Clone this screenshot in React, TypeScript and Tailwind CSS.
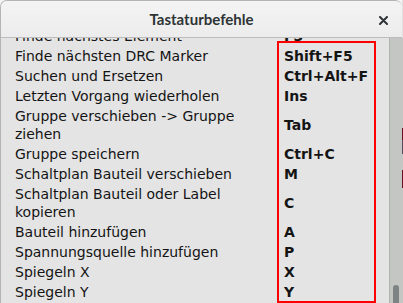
export default function App() {
  const rows: { label: string; keys: string }[] = [
    { label: "Finde nächstes Element", keys: "F3" },
    { label: "Finde nächsten DRC Marker", keys: "Shift+F5" },
    { label: "Suchen und Ersetzen", keys: "Ctrl+Alt+F" },
    { label: "Letzten Vorgang wiederholen", keys: "Ins" },
    { label: "Gruppe verschieben -> Gruppe ziehen", keys: "Tab" },
    { label: "Gruppe speichern", keys: "Ctrl+C" },
    { label: "Schaltplan Bauteil verschieben", keys: "M" },
    { label: "Schaltplan Bauteil oder Label kopieren", keys: "C" },
    { label: "Bauteil hinzufügen", keys: "A" },
    { label: "Spannungsquelle hinzufügen", keys: "P" },
    { label: "Spiegeln X", keys: "X" },
    { label: "Spiegeln Y", keys: "Y" },
  ];

  return (
    <div className="w-[403px] h-[303px] bg-[#f4f4f4] flex overflow-hidden">
      {/* window */}
      <div className="relative w-[402px] h-[303px] flex flex-col rounded-t-[7px] border-l border-t border-[#b4b4b4] overflow-hidden bg-[#e4e4e4]">
        {/* title bar */}
        <div className="h-[37px] shrink-0 flex items-center justify-center relative bg-gradient-to-b from-[#f4f4f4] to-[#ececec] border-b border-[#bcbcbc]">
          <span className="font-['Lato','DejaVu_Sans',sans-serif] font-bold text-[15px] text-[#2e3436]">
            Tastaturbefehle
          </span>
          <svg
            className="absolute right-[14px] top-[15px]"
            width="9"
            height="9"
            viewBox="0 0 9 9"
          >
            <path d="M1 1 L8 8 M8 1 L1 8" stroke="#2e3436" strokeWidth="2" strokeLinecap="round" />
          </svg>
        </div>

        {/* body */}
        <div className="flex flex-1 min-h-0">
          <div className="flex-1 overflow-hidden">
            <div className="-mt-[11px] grid grid-cols-[250px_1fr] gap-x-[19px] gap-y-[2px] pl-[14px] font-['DejaVu_Sans',sans-serif] text-[14px] leading-[18px] text-[#141414]">
              {rows.map((r) => (
                <div key={r.label} className="contents">
                  <div>{r.label}</div>
                  <div className="font-bold flex items-center">{r.keys}</div>
                </div>
              ))}
            </div>
          </div>
          {/* scrollbar */}
          <div className="w-[13px] shrink-0 bg-[#c3c6c3] border-l border-[#b0b3b0] flex flex-col justify-end pl-[3px]">
            <div className="w-[6px] h-[18px] rounded-t-full bg-[#7e8383]" />
          </div>
        </div>

        {/* annotation box */}
        <div className="absolute left-[276px] top-[40px] w-[99px] h-[262px] border-2 border-[#ff0000] pointer-events-none" />
      </div>
      {/* desktop behind */}
      <div className="flex-1 flex flex-col bg-[#c3c6c3]">
        <div className="h-[38px] bg-[#e0e0e0]" />
        <div className="h-[90px]" />
        <div className="h-[12px] bg-[#6b1020]" />
        <div className="h-[14px] bg-[#5a4a60]" />
        <div className="h-[16px]" />
        <div className="h-[18px] bg-[#6b1020]" />
        <div className="flex-1" />
      </div>
    </div>
  );
}
